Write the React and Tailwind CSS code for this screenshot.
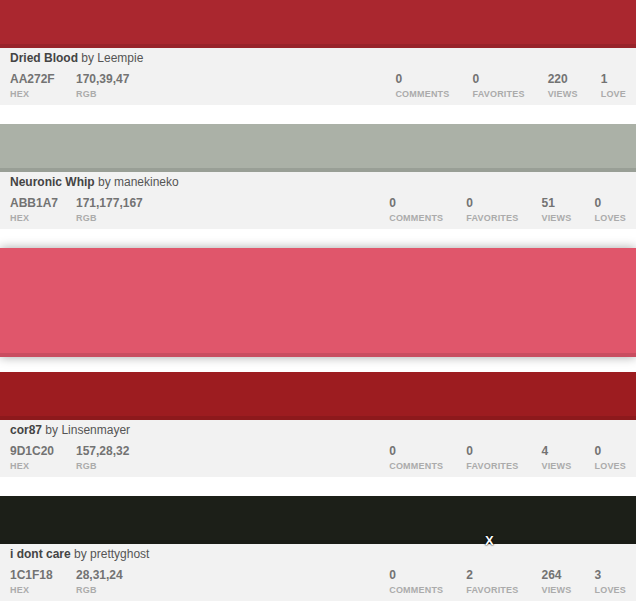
import React from "react";

const palettes = [
  { title: "Dried Blood", user: "Leempie", hex: "AA272F", rgb: "170,39,47", color: "#AA272F", comments: 0, favorites: 0, views: 220, loves: 1 },
  { title: "Neuronic Whip", user: "manekineko", hex: "ABB1A7", rgb: "171,177,167", color: "#ABB1A7", comments: 0, favorites: 0, views: 51, loves: 0 },
  { title: "Hover", user: "", hex: "", rgb: "", color: "#E0566B", hovered: true },
  { title: "cor87", user: "Linsenmayer", hex: "9D1C20", rgb: "157,28,32", color: "#9D1C20", comments: 0, favorites: 0, views: 4, loves: 0 },
  { title: "i dont care", user: "prettyghost", hex: "1C1F18", rgb: "28,31,24", color: "#1C1F18", comments: 0, favorites: 2, views: 264, loves: 3, cursor: true },
];

const Stat = ({ value, label }) => (
  <div className="flex flex-col">
    <span className="text-[12px] leading-[14px] font-bold text-[#737373]">{value}</span>
    <span className="mt-[2px] text-[9px] leading-[12px] font-bold tracking-[0.2px] text-[#ababab]">{label}</span>
  </div>
);

const Card = ({ p }) => {
  if (p.hovered) {
    return (
      <div className="relative h-[105px]">
        <div
          className="absolute left-0 right-0 top-0 h-[109px] border-b-4 border-black/10 shadow-[0_0_10px_rgba(0,0,0,0.35)]"
          style={{ backgroundColor: p.color }}
        />
      </div>
    );
  }
  return (
    <div className="relative h-[105px] flex flex-col">
      {/* swatch */}
      <div className="h-[48px] border-b-4 border-black/10" style={{ backgroundColor: p.color }} />
      {/* info */}
      <div className="flex-1 bg-[#f2f2f2] px-[10px] pt-[3px]">
        <div className="text-[12px] leading-[15px] text-[#555]">
          <span className="font-bold text-[#444]">{p.title}</span> by {p.user}
        </div>
        <div className="mt-[6px] flex items-start">
          <div className="w-[66px]">
            <Stat value={p.hex} label="HEX" />
          </div>
          <Stat value={p.rgb} label="RGB" />
          <div className="ml-auto flex gap-[23px]">
            <Stat value={p.comments} label="COMMENTS" />
            <Stat value={p.favorites} label="FAVORITES" />
            <Stat value={p.views} label="VIEWS" />
            <Stat value={p.loves} label={p.loves === 1 ? "LOVE" : "LOVES"} />
          </div>
        </div>
      </div>
      {p.cursor && (
        <span className="absolute left-[485px] top-[38px] text-[13px] leading-[13px] font-bold text-white [text-shadow:0_0_2px_#000,0_0_1px_#000]">
          X
        </span>
      )}
    </div>
  );
};

export default function App() {
  return (
    <div className="w-[636px] h-[604px] overflow-hidden bg-white font-['Liberation_Sans',Arial,sans-serif]">
      <div className="flex flex-col gap-[19px]">
        {palettes.map((p, i) => (
          <Card key={i} p={p} />
        ))}
      </div>
    </div>
  );
}
